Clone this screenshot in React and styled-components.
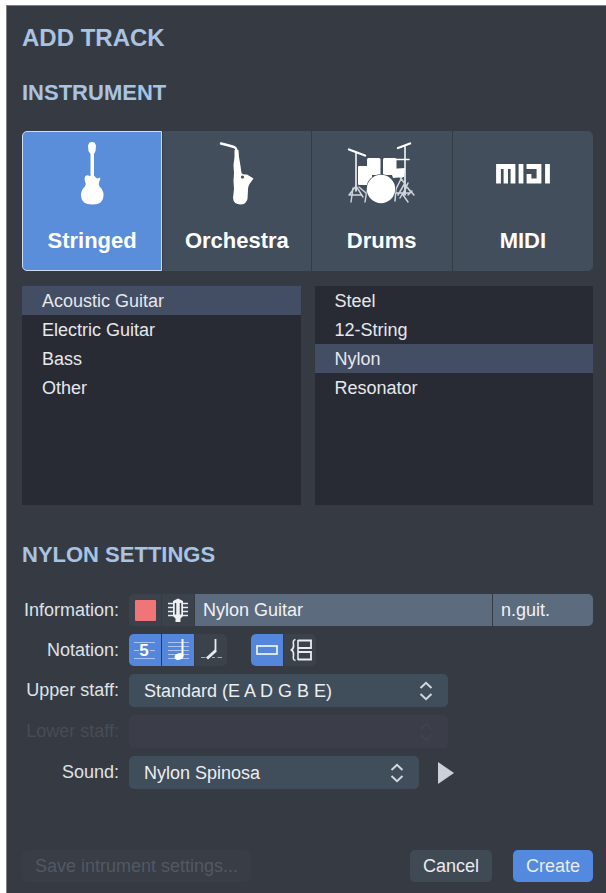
/**
 *
 * AddTrackDialog
 *
 */

import React, { useState } from 'react';
import styled, { createGlobalStyle, css } from 'styled-components';

const GlobalStyle = createGlobalStyle`
  *,
  *::before,
  *::after {
    box-sizing: border-box;
  }

  body {
    margin: 0;
    background: #fff;
  }

  body,
  button,
  input,
  select {
    font-family: 'Liberation Sans', Arial, sans-serif;
    font-size: 18px;
  }
`;

const Dialog = styled.form`
  display: flex;
  flex-direction: column;
  min-height: calc(100vh - 5px);
  margin: 5px 0 0 6px;
  padding: 19px 13px 11px 15px;
  border-top: 1px solid #7b7f84;
  border-left: 1px solid #7b7f84;
  background: #363b43;
  color: #dfe2e7;
`;

const Title = styled.h1`
  margin: 0 0 29px;
  color: #a9c3e3;
  font-size: 24px;
  line-height: 26px;
`;

const SectionTitle = styled.h2`
  margin: 0 0 ${props => (props.$tight ? '25px' : '26px')};
  color: #a9c3e3;
  font-size: 22px;
  line-height: 26px;
`;

const Tiles = styled.div`
  display: grid;
  grid-template-columns: 20fr 21fr 20fr 20fr;
  gap: 1px;
  margin-bottom: 15px;
`;

const Tile = styled.button`
  display: flex;
  flex-direction: column;
  align-items: center;
  gap: 23px;
  padding: 9px 0 16px;
  border: 1px solid #424e5b;
  background: #424e5b;
  color: #fff;
  font-size: 22px;
  font-weight: bold;
  line-height: 26px;

  &:first-child {
    border-radius: 5px 0 0 5px;
  }

  &:last-child {
    border-radius: 0 5px 5px 0;
  }

  ${props =>
    props.$active &&
    css`
      border-color: #cfdcf0;
      background: #5a8dda;
    `};
`;

const Lists = styled.div`
  display: grid;
  grid-template-columns: 1fr 1fr;
  gap: 14px;
  margin-bottom: 37px;
`;

const List = styled.ul`
  min-height: 219px;
  margin: 0;
  padding: 0;
  background: #282b34;
  list-style: none;
`;

const ListItem = styled.button`
  display: block;
  width: 100%;
  padding: 2px 20px 0;
  border: 0;
  background: ${props => (props.$active ? '#434d63' : 'transparent')};
  color: #e6e8ec;
  line-height: 27px;
  text-align: left;
`;

const Settings = styled.div`
  display: grid;
  grid-template-columns: 97px 1fr;
  gap: 8px 10px;
  align-items: center;
`;

const Label = styled.label`
  color: ${props => (props.$disabled ? '#474c55' : '#dfe2e7')};
  text-align: right;
  white-space: nowrap;
`;

const Controls = styled.div`
  display: flex;
  align-items: center;
  gap: ${props => props.$gap || '1px'};
`;

const IconButton = styled.button`
  display: flex;
  align-items: center;
  justify-content: center;
  width: 32px;
  height: 32px;
  padding: 0;
  border: 0;
  border-radius: ${props => props.$radius || '0'};
  background: ${props => (props.$active ? '#5486dc' : '#3c424b')};
  color: #e8ebf0;
`;

const Swatch = styled.span`
  width: 21px;
  height: 21px;
  border-radius: 1px;
  background: #f07578;
`;

const TextField = styled.input`
  flex: 1;
  min-width: 0;
  height: 32px;
  padding: 0 8px;
  border: 0;
  background: #5d6b7e;
  color: #f0f2f5;

  ${props =>
    props.$short &&
    css`
      flex: 0 0 100px;
      border-radius: 0 5px 5px 0;
    `};
`;

const SelectBox = styled.div`
  position: relative;
  width: ${props => props.$width};
  color: ${props => (props.$disabled ? '#40434e' : '#d3d8df')};
`;

const Select = styled.select`
  display: block;
  width: 100%;
  height: 33px;
  padding: 0 40px 0 15px;
  border: 0;
  border-radius: 5px;
  appearance: none;
  background: #404d5a;
  color: #eceef1;

  &:disabled {
    background: #3b3e48;
    opacity: 1;
  }
`;

const SelectArrows = styled.svg`
  position: absolute;
  top: 7px;
  right: 14px;
  pointer-events: none;
`;

const PlayButton = styled.button`
  display: flex;
  padding: 0;
  border: 0;
  background: none;
  color: #ccd0d8;
`;

const Footer = styled.div`
  display: flex;
  gap: 21px;
  margin-top: auto;
`;

const Button = styled.button`
  height: 32px;
  padding: 0 13px;
  border: 0;
  border-radius: 5px;
  background: ${props => (props.$primary ? '#5389de' : '#404a55')};
  color: #e9ecf1;

  &:disabled {
    margin-right: auto;
    background: #383d46;
    color: #535963;
  }
`;

const GuitarIcon = () => (
  <svg width="80" height="64" viewBox="0 0 80 64" fill="#fff">
    <path d="M37.5 1.5Q40 .5 42.500 1.5L44 4.5L43.5 10L42 13V36H38.500V13L36.500 10L36 4.5Z" />
    <path d="M33.5 35Q35.5 33.5 37.5 35H42.5Q45 39 47.5 36.5Q49 37.5 47.5 40Q46 43 47.5 45.5Q51.5 49 51.5 54Q51.5 63.5 40.5 63.5Q29 63.500 29 54Q29 49 33 45.5Q34.5 43 33 40.5Q32 36.5 33.5 35Z" />
  </svg>
);

const SaxIcon = () => (
  <svg width="80" height="64" viewBox="0 0 80 64" fill="#fff">
    <path
      d="M24 2.5L30 4L37 6Q39.5 7 39.5 10"
      fill="none"
      stroke="#fff"
      strokeWidth="2.4"
      strokeLinecap="round"
    />
    <path d="M37.5 9L41.5 9L42 16L43.5 25L44.5 32Q46 34 50 33.5L56.500 37.5L54 41Q51 44 51 49L50.5 58Q49 63.5 43.5 63.5Q36.5 63.5 36 57L37 48L36.500 40L37 32L36.5 24L37.500 16Z" />
    <circle cx="45.5" cy="36" r="1.6" fill="#424e5b" />
  </svg>
);

const DrumsIcon = () => (
  <svg width="80" height="64" viewBox="0 0 80 64" fill="#fff">
    <g stroke="#fff" strokeLinecap="round" fill="none">
      <path d="M7 8.5L23 14.5M56 7L68 2.5" strokeWidth="2.4" />
      <path d="M54 18.5H67" strokeWidth="1.6" />
      <path d="M14 12V50M63 5V54" strokeWidth="1.5" />
    </g>
    <g stroke="#cfd5dc" strokeLinecap="round" fill="none">
      <path d="M14 45L7 54M14 45L21 56M11 47L9 61M17 46L24 52M7 54H20M25 48L23 61" strokeWidth="1.4" />
      <path d="M60 36L54 48L53 60M58 36L68 50M63 42L56 54M63 44L72 54M62 50L58 57M66 42L61 54L66 61M54 52H68M70 50L66 54" strokeWidth="1.5" />
    </g>
    <rect x="16" y="25" width="14" height="19" rx="1" />
    <rect x="25" y="17" width="13.5" height="17" rx="1.5" />
    <rect x="41" y="17" width="13.5" height="17" rx="1.5" />
    <path d="M48 28L63 27L62 36L51 37Z" />
    <circle cx="39" cy="48" r="14.8" fill="#424e5b" />
    <circle cx="39" cy="48" r="14.2" />
  </svg>
);

const MidiIcon = () => (
  <svg width="80" height="64" viewBox="0 0 80 64" fill="none" stroke="#fff">
    <polyline points="15.5,42.5 15.5,25.5 30,25.5 30,42.5" strokeWidth="4.8" />
    <line x1="22.8" y1="24" x2="22.8" y2="42.5" strokeWidth="4.4" />
    <line x1="38" y1="23" x2="38" y2="42.5" strokeWidth="4.8" />
    <polyline points="43.5,25.5 56,25.5 56,40 46,40 46,33" strokeWidth="4.800" />
    <line x1="64.5" y1="23" x2="64.5" y2="42.5" strokeWidth="4.8" />
  </svg>
);

const HeadstockIcon = () => (
  <svg width="32" height="32" viewBox="0 0 32 32" fill="none" stroke="currentColor">
    <path d="M6 9.5H26M6 13.5H26M6 17.5H26M6 21.5H26" strokeWidth="1.6" />
    <path d="M11 7L14 5.500L16 4.5L18 5.5L21 7V22L18.5 24.500V28H13.5V24.5L11 22Z" fill="#eef0f4" stroke="none" />
    <path d="M13.5 9V20.5M18.5 9V20.5" stroke="#3c424b" strokeWidth="1.5" />
  </svg>
);

const TabIcon = () => (
  <svg width="32" height="32" viewBox="0 0 32 32">
    <path d="M5 8.5H26M5 16.5H10M21 16.5H26M5 24.5H26" stroke="#a9c4ee" />
    <text x="15" y="22" fill="#fff" fontSize="17" fontWeight="bold" textAnchor="middle">
      5
    </text>
  </svg>
);

const StaffIcon = () => (
  <svg width="32" height="32" viewBox="0 0 32 32">
    <path d="M6 8.5H27M6 12.5H27M6 16.5H27M6 20.5H27M6 24.5H27" stroke="#a9c4ee" />
    <path d="M20.5 5V22" stroke="#fff" strokeWidth="2" />
    <ellipse cx="17" cy="22.5" rx="4.6" ry="3.2" fill="#fff" transform="rotate(-20 17 22.5)" />
  </svg>
);

const SlashIcon = () => (
  <svg width="32" height="32" viewBox="0 0 32 32" fill="none" stroke="currentColor">
    <path d="M20.5 5V17.5" strokeWidth="1.8" />
    <path d="M20.8 16.500L12 24.5" strokeWidth="3" />
    <path d="M6 23.5H10.5M17 23.5H20M22.5 23.5H27" stroke="#a5abb4" />
  </svg>
);

const SingleStaffIcon = () => (
  <svg width="32" height="32" viewBox="0 0 32 32" fill="none" stroke="#e8eefb">
    <rect x="6" y="12" width="20" height="8" strokeWidth="1.8" />
  </svg>
);

const GrandStaffIcon = () => (
  <svg width="32" height="32" viewBox="0 0 32 32" fill="none" stroke="currentColor">
    <path d="M11.5 5.5Q8.5 6 9.5 10.5Q10 14.5 7.5 16Q10 17.5 9.5 21.5Q8.5 26 11.5 26.5" strokeWidth="1.6" />
    <path d="M14 6V26" strokeWidth="1.6" />
    <path d="M14 6.5H27V14H14M14 18H27V25.5H14" strokeWidth="1.8" />
  </svg>
);

const Arrows = () => (
  <SelectArrows
    width="16"
    height="20"
    viewBox="0 0 16 20"
    fill="none"
    stroke="currentColor"
    strokeWidth="2"
  >
    <path d="M2.5 7L8 1.8L13.5 7M2.5 13L8 18.2L13.5 13" />
  </SelectArrows>
);

const CATEGORIES = [
  { name: 'Stringed', Icon: GuitarIcon },
  { name: 'Orchestra', Icon: SaxIcon },
  { name: 'Drums', Icon: DrumsIcon },
  { name: 'MIDI', Icon: MidiIcon },
];

const FAMILIES = ['Acoustic Guitar', 'Electric Guitar', 'Bass', 'Other'];
const MODELS = ['Steel', '12-String', 'Nylon', 'Resonator'];

const Picker = ({ label, items, value, onChange }) => (
  <List aria-label={label}>
    {items.map(item => (
      <li key={item}>
        <ListItem
          type="button"
          $active={item === value}
          aria-pressed={item === value}
          onClick={() => onChange(item)}
        >
          {item}
        </ListItem>
      </li>
    ))}
  </List>
);

export default function App() {
  const [category, setCategory] = useState('Stringed');
  const [family, setFamily] = useState('Acoustic Guitar');
  const [model, setModel] = useState('Nylon');
  const [notation, setNotation] = useState({ tab: true, staff: true, slash: false });
  const [grandStaff, setGrandStaff] = useState(false);

  const toggle = key => setNotation({ ...notation, [key]: !notation[key] });

  return (
    <>
      <GlobalStyle />
      <Dialog onSubmit={e => e.preventDefault()}>
        <Title>ADD TRACK</Title>

        <SectionTitle $tight>INSTRUMENT</SectionTitle>
        <Tiles>
          {CATEGORIES.map(({ name, Icon }) => (
            <Tile
              key={name}
              type="button"
              $active={name === category}
              aria-pressed={name === category}
              onClick={() => setCategory(name)}
            >
              <Icon />
              {name}
            </Tile>
          ))}
        </Tiles>

        <Lists>
          <Picker label="Family" items={FAMILIES} value={family} onChange={setFamily} />
          <Picker label="Model" items={MODELS} value={model} onChange={setModel} />
        </Lists>

        <SectionTitle>NYLON SETTINGS</SectionTitle>
        <Settings>
          <Label htmlFor="trackName">Information:</Label>
          <Controls>
            <IconButton type="button" $radius="5px 0 0 5px" aria-label="Track color">
              <Swatch />
            </IconButton>
            <IconButton type="button" aria-label="Track icon">
              <HeadstockIcon />
            </IconButton>
            <TextField id="trackName" type="text" defaultValue="Nylon Guitar" />
            <TextField $short type="text" defaultValue="n.guit." aria-label="Short name" />
          </Controls>

          <Label as="span">Notation:</Label>
          <Controls $gap="24px">
            <Controls>
              <IconButton
                type="button"
                $radius="5px 0 0 5px"
                $active={notation.tab}
                aria-label="Tablature"
                onClick={() => toggle('tab')}
              >
                <TabIcon />
              </IconButton>
              <IconButton
                type="button"
                $active={notation.staff}
                aria-label="Standard notation"
                onClick={() => toggle('staff')}
              >
                <StaffIcon />
              </IconButton>
              <IconButton
                type="button"
                $radius="0 5px 5px 0"
                $active={notation.slash}
                aria-label="Slash"
                onClick={() => toggle('slash')}
              >
                <SlashIcon />
              </IconButton>
            </Controls>
            <Controls>
              <IconButton
                type="button"
                $radius="5px 0 0 5px"
                $active={!grandStaff}
                aria-label="Single staff"
                onClick={() => setGrandStaff(false)}
              >
                <SingleStaffIcon />
              </IconButton>
              <IconButton
                type="button"
                $radius="0 5px 5px 0"
                $active={grandStaff}
                aria-label="Grand staff"
                onClick={() => setGrandStaff(true)}
              >
                <GrandStaffIcon />
              </IconButton>
            </Controls>
          </Controls>

          <Label htmlFor="upperStaff">Upper staff:</Label>
          <SelectBox $width="319px">
            <Select id="upperStaff">
              <option>Standard (E A D G B E)</option>
            </Select>
            <Arrows />
          </SelectBox>

          <Label htmlFor="lowerStaff" $disabled>
            Lower staff:
          </Label>
          <SelectBox $width="319px" $disabled>
            <Select id="lowerStaff" disabled />
            <Arrows />
          </SelectBox>

          <Label htmlFor="sound">Sound:</Label>
          <Controls $gap="19px">
            <SelectBox $width="290px">
              <Select id="sound">
                <option>Nylon Spinosa</option>
              </Select>
              <Arrows />
            </SelectBox>
            <PlayButton type="button" aria-label="Play sound">
              <svg width="16" height="22" viewBox="0 0 16 22" fill="currentColor">
                <path d="M0 0L16 11L0 22Z" />
              </svg>
            </PlayButton>
          </Controls>
        </Settings>

        <Footer>
          <Button type="button" disabled>
            Save intrument settings...
          </Button>
          <Button type="button">Cancel</Button>
          <Button type="submit" $primary>
            Create
          </Button>
        </Footer>
      </Dialog>
    </>
  );
}
